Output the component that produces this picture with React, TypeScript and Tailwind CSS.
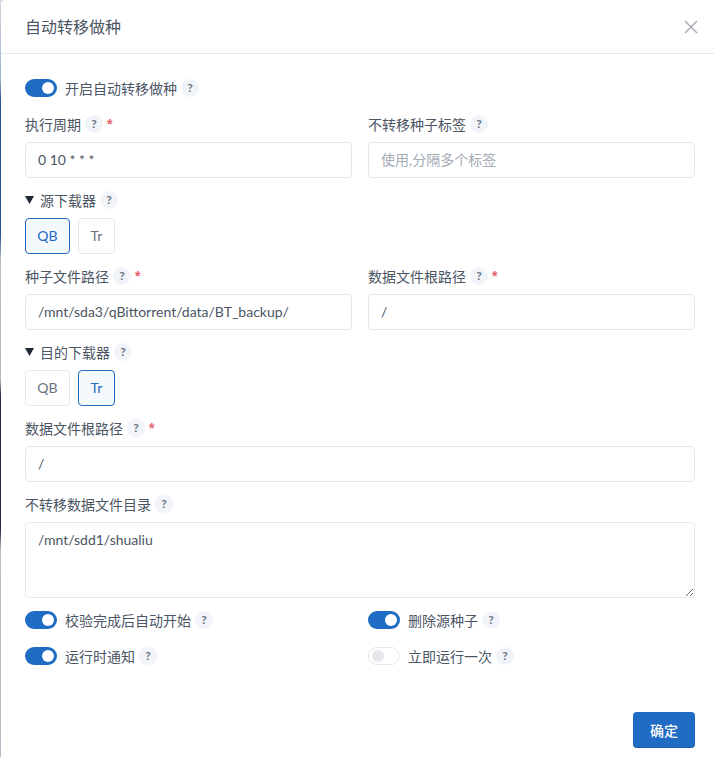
const font = "font-['Lato','Noto_Sans_CJK_SC',sans-serif]"

function Help() {
  return (
    <span className="ml-[4px] flex h-[18px] w-[18px] shrink-0 items-center justify-center rounded-full bg-[#f1f4f9] text-[12px] font-bold text-[#6b7280]">
      ?
    </span>
  )
}

function Label({ text, required }: { text: string; required?: boolean }) {
  return (
    <div className="flex h-[22px] items-center text-[14px] text-[#4b5563]">
      <span>{text}</span>
      <Help />
      {required && <span className="ml-[4px] font-['Liberation_Sans',sans-serif] text-[14px] font-bold leading-none text-[#e5606a]">*</span>}
    </div>
  )
}

function Input({ value, placeholder }: { value?: string; placeholder?: string }) {
  return (
    <div className={`mt-[7px] flex h-[36px] items-center rounded border border-[#e5e7eb] px-[12px] pb-[2px] text-[14px] ${value ? 'text-[#4b5563]' : 'text-[#a5abb5]'}`}>
      {value ?? placeholder}
    </div>
  )
}

function Toggle({ label, on = true }: { label: string; on?: boolean }) {
  return (
    <div className="flex h-[22px] items-center text-[14px] text-[#4b5563]">
      {on ? (
        <span className="flex h-[18px] w-[32px] items-center justify-end rounded-full bg-[#206bc4] pr-[3px]">
          <span className="h-[12px] w-[12px] rounded-full bg-white" />
        </span>
      ) : (
        <span className="flex h-[18px] w-[32px] items-center rounded-full border border-[#e5e7eb] bg-white pl-[3px]">
          <span className="h-[12px] w-[12px] rounded-full bg-[#e5e7eb]" />
        </span>
      )}
      <span className="ml-[8px]">{label}</span>
      <Help />
    </div>
  )
}

function Choice({ text, active }: { text: string; active?: boolean }) {
  return (
    <div className={`flex h-[36px] items-center justify-center rounded border pb-[2px] text-[14px] ${text === 'QB' ? 'w-[45px]' : 'w-[37px]'} ${active ? 'border-[#206bc4] bg-[#f5f9fd] text-[#206bc4]' : 'border-[#e5e7eb] text-[#6b7280]'}`}>
      {text}
    </div>
  )
}

function Section({ text }: { text: string }) {
  return (
    <div className="flex h-[22px] items-center text-[14px] text-[#4b5563]">
      <svg className="mr-[6px] h-[8px] w-[9px] text-[#1f2937]" viewBox="0 0 9 8" fill="currentColor">
        <path d="M0 0h9L4.5 8z" />
      </svg>
      <span>{text}</span>
      <Help />
    </div>
  )
}

export default function App() {
  return (
    <div className={`${font} h-[757px] w-[714px] overflow-hidden bg-[linear-gradient(to_bottom,#cfd5de_0px,#9fb2cc_80px,#2a5298_100px,#2a5298_235px,#b9bdc6_260px,#b4b6bd_380px,#2a2f45_395px,#2a2f45_530px,#b9bcc6_550px,#b5bbc8_757px)]`}>
      <div className="ml-px flex h-full flex-col rounded-tl-[4px] bg-white">
        <div className="flex h-[54px] shrink-0 items-center justify-between border-b border-[#e5e7eb] pl-[24px] pr-[15px]">
          <h2 className="text-[16px] text-[#4b5563]">自动转移做种</h2>
          <svg className="h-[16px] w-[16px] text-[#a8acb3]" viewBox="0 0 16 16" fill="none" stroke="currentColor" strokeWidth={1.5}>
            <path d="M2 2l12 12M14 2L2 14" />
          </svg>
        </div>
        <div className="flex flex-1 flex-col pl-[24px] pr-[19px] pt-[23px]">
          <Toggle label="开启自动转移做种" />
          <div className="mt-[14px] grid grid-cols-2 gap-x-[16px]">
            <div>
              <Label text="执行周期" required />
              <Input value="0 10 * * *" />
            </div>
            <div>
              <Label text="不转移种子标签" />
              <Input placeholder="使用,分隔多个标签" />
            </div>
          </div>
          <div className="mt-[11px]">
            <Section text="源下载器" />
          </div>
          <div className="mt-[7px] flex gap-[8px]">
            <Choice text="QB" active />
            <Choice text="Tr" />
          </div>
          <div className="mt-[11px] grid grid-cols-2 gap-x-[16px]">
            <div>
              <Label text="种子文件路径" required />
              <Input value="/mnt/sda3/qBittorrent/data/BT_backup/" />
            </div>
            <div>
              <Label text="数据文件根路径" required />
              <Input value="/" />
            </div>
          </div>
          <div className="mt-[11px]">
            <Section text="目的下载器" />
          </div>
          <div className="mt-[7px] flex gap-[8px]">
            <Choice text="QB" />
            <Choice text="Tr" active />
          </div>
          <div className="mt-[11px]">
            <Label text="数据文件根路径" required />
            <Input value="/" />
          </div>
          <div className="mt-[11px]">
            <Label text="不转移数据文件目录" />
            <textarea
              readOnly
              value="/mnt/sdd1/shualiu"
              className="mt-[7px] block h-[76px] w-full rounded border border-[#e5e7eb] px-[12px] py-[6px] text-[14px] text-[#4b5563] outline-none"
            />
          </div>
          <div className="mt-[11px] grid grid-cols-2 gap-x-[16px] gap-y-[14px]">
            <Toggle label="校验完成后自动开始" />
            <Toggle label="删除源种子" />
            <Toggle label="运行时通知" />
            <Toggle label="立即运行一次" on={false} />
          </div>
          <div className="mt-auto flex justify-end pb-[9px]">
            <button type="button" className="h-[36px] w-[62px] rounded bg-[#206bc4] text-[14px] font-medium text-white shadow-[inset_0_-1px_0_rgba(0,0,0,0.1)]">
              确定
            </button>
          </div>
        </div>
      </div>
    </div>
  )
}
